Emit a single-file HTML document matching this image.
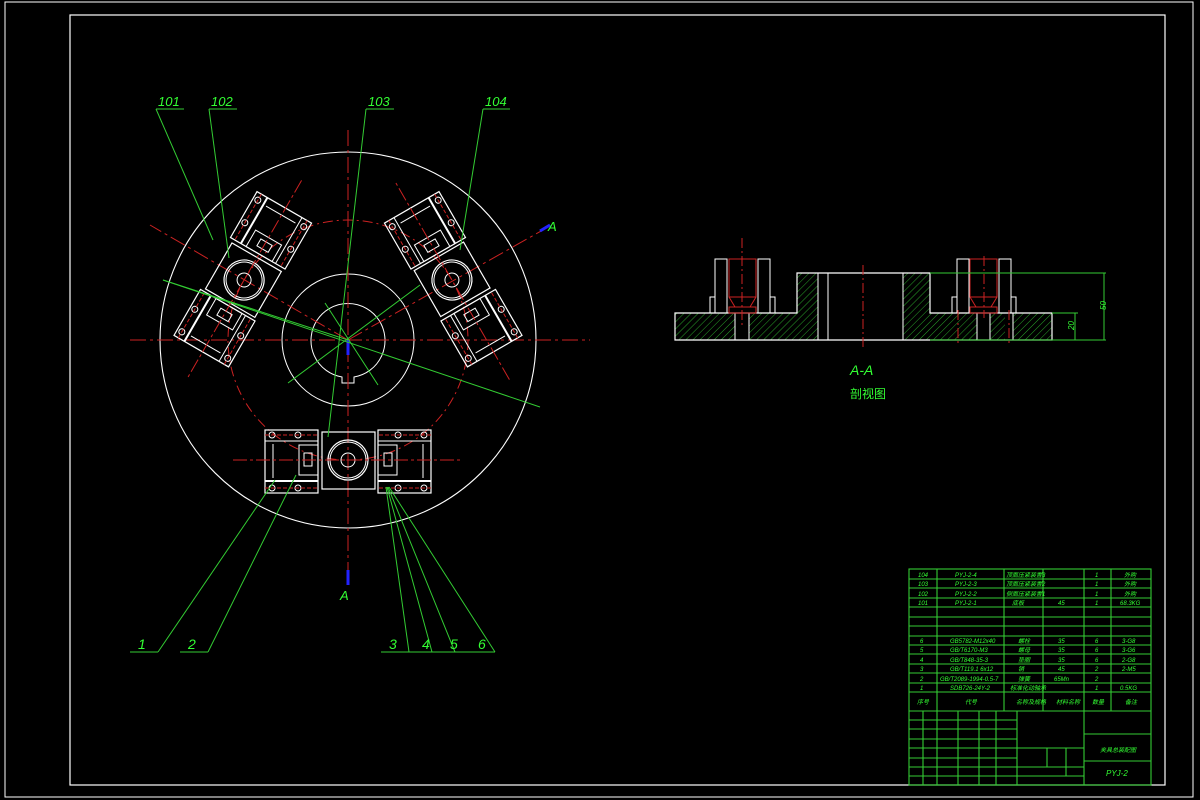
<!DOCTYPE html>
<html><head><meta charset="utf-8"><style>
html,body{margin:0;padding:0;background:#000;}
svg{display:block}
text{font-family:"Liberation Sans","Noto Sans CJK SC",sans-serif;font-style:italic;fill:#3f3}
</style></head><body>
<svg width="1200" height="800" viewBox="0 0 1200 800" xmlns="http://www.w3.org/2000/svg">
<defs>
<pattern id="h" width="5" height="5" patternUnits="userSpaceOnUse" patternTransform="rotate(45)">
<line x1="0" y1="0" x2="0" y2="5" stroke="#3c3" stroke-width="0.8"/></pattern>
<g id="clamp">
 <rect x="-83" y="90" width="53" height="63" fill="none" stroke="#fff" stroke-width="1.2"/>
 <line x1="-83" y1="101" x2="-30" y2="101" stroke="#fff"/>
 <line x1="-83" y1="141" x2="-30" y2="141" stroke="#fff" stroke-width="2"/>
 <rect x="-49" y="105" width="19" height="30" fill="none" stroke="#fff"/>
 <rect x="-44" y="113" width="8" height="13" fill="none" stroke="#fff"/>
 <line x1="-75" y1="104" x2="-75" y2="138" stroke="#fff"/>
 <circle cx="-76" cy="95" r="3" fill="none" stroke="#fff"/><circle cx="-76" cy="148" r="3" fill="none" stroke="#fff"/>
 <circle cx="-50" cy="95" r="3" fill="none" stroke="#fff"/><circle cx="-50" cy="148" r="3" fill="none" stroke="#fff"/>
 <line x1="-83" y1="95" x2="-30" y2="95" stroke="#c22" stroke-dasharray="4 2"/>
 <line x1="-83" y1="148" x2="-30" y2="148" stroke="#c22" stroke-dasharray="4 2"/>
</g>
<g id="assy">
 <rect x="-26" y="92" width="53" height="57" fill="none" stroke="#fff" stroke-width="1.2"/>
 <circle cx="0" cy="120" r="20" fill="none" stroke="#fff" stroke-width="1.2"/>
 <circle cx="0" cy="120" r="18" fill="none" stroke="#fff"/>
 <circle cx="0" cy="120" r="7" fill="none" stroke="#fff"/>
 <use href="#clamp"/>
 <use href="#clamp" transform="scale(-1,1)"/>
 <line x1="-115" y1="120" x2="115" y2="120" stroke="#c22" stroke-dasharray="14 3 3 3"/>
</g>
</defs>
<rect x="5" y="2" width="1188" height="795" fill="none" stroke="#fff" stroke-width="1"/>
<rect x="70" y="15" width="1095" height="770" fill="none" stroke="#fff" stroke-width="1.2"/>

<!-- main view -->
<g>
<circle cx="348" cy="340" r="188" fill="none" stroke="#fff" stroke-width="1.1"/>
<circle cx="348" cy="340" r="66" fill="none" stroke="#fff"/>
<path d="M342 377 A37 37 0 1 1 354 377 L354 383 L342 383 Z" fill="none" stroke="#fff"/>
<circle cx="348" cy="340" r="120" fill="none" stroke="#c22" stroke-dasharray="10 4 2 4"/>
<line x1="130" y1="340" x2="590" y2="340" stroke="#c22" stroke-dasharray="16 4 3 4"/>
<line x1="348" y1="130" x2="348" y2="575" stroke="#c22" stroke-dasharray="16 4 3 4"/>
<line x1="348" y1="340" x2="550" y2="226" stroke="#c22" stroke-dasharray="16 4 3 4"/>
<line x1="348" y1="340" x2="150" y2="225" stroke="#c22" stroke-dasharray="16 4 3 4"/>
<line x1="540" y1="231" x2="550" y2="225" stroke="#22f" stroke-width="3"/>
<line x1="348" y1="570" x2="348" y2="585" stroke="#22f" stroke-width="3"/>
<line x1="348" y1="340" x2="348" y2="355" stroke="#22f" stroke-width="3"/>
<text x="548" y="231" font-size="13">A</text>
<text x="340" y="600" font-size="13">A</text>
<use href="#assy" transform="translate(348,340)"/>
<use href="#assy" transform="translate(348,340) rotate(120)"/>
<use href="#assy" transform="translate(348,340) rotate(240)"/>
<!-- dims -->
<g stroke="#3c3" stroke-width="1" fill="none">
<line x1="163" y1="280" x2="540" y2="407"/>
<line x1="163" y1="280" x2="348" y2="340"/>
<line x1="288" y1="383" x2="420" y2="285"/>
<line x1="325" y1="303" x2="378" y2="385"/>
<line x1="156" y1="109" x2="184" y2="109"/><line x1="156" y1="109" x2="213" y2="240"/>
<line x1="209" y1="109" x2="237" y2="109"/><line x1="209" y1="109" x2="229" y2="258"/>
<line x1="366" y1="109" x2="394" y2="109"/><line x1="366" y1="109" x2="328" y2="437"/>
<line x1="483" y1="109" x2="510" y2="109"/><line x1="483" y1="109" x2="460" y2="250"/>
<line x1="130" y1="652" x2="158" y2="652"/><line x1="158" y1="652" x2="275" y2="480"/>
<line x1="180" y1="652" x2="208" y2="652"/><line x1="208" y1="652" x2="296" y2="475"/>
<line x1="381" y1="652" x2="495" y2="652"/>
<line x1="409" y1="652" x2="386" y2="487"/><line x1="432" y1="652" x2="387" y2="487"/>
<line x1="455" y1="652" x2="388" y2="487"/><line x1="495" y1="652" x2="389" y2="487"/>
</g>
<text x="158" y="106" font-size="13">101</text><text x="211" y="106" font-size="13">102</text>
<text x="368" y="106" font-size="13">103</text><text x="485" y="106" font-size="13">104</text>
<text x="138" y="649" font-size="14">1</text><text x="188" y="649" font-size="14">2</text>
<text x="389" y="649" font-size="14">3</text><text x="422" y="649" font-size="14">4</text>
<text x="450" y="649" font-size="14">5</text><text x="478" y="649" font-size="14">6</text>
</g>

<!-- section view -->
<g>
<path d="M675 313 H735 V340 H675 Z M749 313 H797 V273 H818 V340 H749 Z M903 273 H930 V313 H977 V340 H903 Z M990 313 H1005 V340 H990 Z M1013 313 H1052 V340 H1013 Z" fill="url(#h)"/>
<path d="M675 313 H797 V273 H930 V313 H1052 V340 H675 Z" fill="none" stroke="#fff" stroke-width="1.2"/>
<line x1="818" y1="273" x2="818" y2="340" stroke="#fff"/><line x1="828" y1="273" x2="828" y2="340" stroke="#fff"/>
<line x1="903" y1="273" x2="903" y2="340" stroke="#fff"/>
<line x1="735" y1="313" x2="735" y2="340" stroke="#fff"/><line x1="749" y1="313" x2="749" y2="340" stroke="#fff"/>
<line x1="977" y1="313" x2="977" y2="340" stroke="#fff"/><line x1="990" y1="313" x2="990" y2="340" stroke="#fff"/>
<line x1="1013" y1="313" x2="1013" y2="340" stroke="#fff"/>
<g fill="none" stroke="#fff">
<rect x="715" y="259" width="12" height="54"/><rect x="758" y="259" width="12" height="54"/>
<rect x="710" y="297" width="5" height="16"/><rect x="770" y="297" width="5" height="16"/>
<rect x="957" y="259" width="12" height="54"/><rect x="999" y="259" width="12" height="54"/>
<rect x="952" y="297" width="5" height="16"/><rect x="1011" y="297" width="5" height="16"/>
</g>
<g fill="none" stroke="#c22">
<rect x="729" y="259" width="27" height="38"/><path d="M729 297 L735 307 H750 L756 297"/><rect x="729" y="307" width="27" height="6"/>
<rect x="970" y="259" width="27" height="38"/><path d="M970 297 L976 307 H991 L997 297"/><rect x="970" y="307" width="27" height="6"/>
<line x1="742" y1="238" x2="742" y2="326" stroke-dasharray="10 3 2 3"/>
<line x1="863" y1="265" x2="863" y2="348" stroke-dasharray="10 3 2 3"/>
<line x1="984" y1="256" x2="984" y2="318" stroke-dasharray="10 3 2 3"/>
<line x1="958" y1="310" x2="958" y2="344" stroke-dasharray="10 3 2 3"/>
<line x1="1009" y1="310" x2="1009" y2="344" stroke-dasharray="10 3 2 3"/>
</g>
<g stroke="#3c3" fill="none">
<line x1="930" y1="273" x2="1106" y2="273"/><line x1="930" y1="340" x2="1106" y2="340"/>
<line x1="1052" y1="313" x2="1078" y2="313"/>
<line x1="1104" y1="273" x2="1104" y2="340"/><line x1="1075" y1="313" x2="1075" y2="340"/>
</g>
<text x="1096" y="312" font-size="8" transform="rotate(-90 1100 306)">50</text>
<text x="1066" y="330" font-size="8" transform="rotate(-90 1070 326)">20</text>
<text x="850" y="375" font-size="14">A-A</text>
<text x="850" y="398" font-size="12" style="font-style:normal">剖视图</text>
</g>

<!-- title block -->
<g stroke="#3c3" stroke-width="1.1" fill="none">
<rect x="909" y="569" width="242" height="216"/>
<path d="M909 579H1151M909 588H1151M909 598H1151M909 607H1151M909 617H1151M909 626H1151M909 636H1151M909 645H1151M909 654H1151M909 664H1151M909 673H1151M909 683H1151M909 692H1151M909 711H1151"/>
<path d="M937 569V711M1004 569V711M1043 569V711M1084 569V711M1111 569V711"/>
<path d="M909 720H1017M909 729H1017M909 739H1017M909 748H1017M909 758H1017M909 767H1017M909 776H1017"/>
<path d="M923 711V785M937 711V785M958 711V785M979 711V785M996 711V785M1017 711V785"/>
<path d="M1084 711V785M1084 734H1151M1084 761H1151M1017 748H1084M1017 767H1084M1017 776H1084M1047 748V767M1066 748V776"/>
</g>
<g font-size="6" style="font-style:normal">
<text x="918" y="577">104</text><text x="955" y="577">PYJ-2-4</text><text x="1006" y="577">顶面压紧装置3</text><text x="1095" y="577">1</text><text x="1124" y="577">外购</text>
<text x="918" y="586">103</text><text x="955" y="586">PYJ-2-3</text><text x="1006" y="586">顶面压紧装置2</text><text x="1095" y="586">1</text><text x="1124" y="586">外购</text>
<text x="918" y="596">102</text><text x="955" y="596">PYJ-2-2</text><text x="1006" y="596">侧面压紧装置1</text><text x="1095" y="596">1</text><text x="1124" y="596">外购</text>
<text x="918" y="605">101</text><text x="955" y="605">PYJ-2-1</text><text x="1012" y="605">底板</text><text x="1058" y="605">45</text><text x="1095" y="605">1</text><text x="1120" y="605">68.3KG</text>
<text x="920" y="643">6</text><text x="950" y="643">GB5782-M12x40</text><text x="1018" y="643">螺栓</text><text x="1058" y="643">35</text><text x="1095" y="643">6</text><text x="1122" y="643">3-G8</text>
<text x="920" y="652">5</text><text x="950" y="652">GB/T6170-M3</text><text x="1018" y="652">螺母</text><text x="1058" y="652">35</text><text x="1095" y="652">6</text><text x="1122" y="652">3-G6</text>
<text x="920" y="662">4</text><text x="950" y="662">GB/T848-35-3</text><text x="1018" y="662">垫圈</text><text x="1058" y="662">35</text><text x="1095" y="662">6</text><text x="1122" y="662">2-G8</text>
<text x="920" y="671">3</text><text x="950" y="671">GB/T119.1 6x12</text><text x="1018" y="671">销</text><text x="1058" y="671">45</text><text x="1095" y="671">2</text><text x="1122" y="671">2-M5</text>
<text x="920" y="681">2</text><text x="940" y="681">GB/T2089-1994-0.5-7</text><text x="1018" y="681">弹簧</text><text x="1054" y="681">65Mn</text><text x="1095" y="681">2</text>
<text x="920" y="690">1</text><text x="950" y="690">SDB726-24Y-2</text><text x="1010" y="690">标准化动轴承</text><text x="1095" y="690">1</text><text x="1120" y="690">0.5KG</text>
<text x="917" y="704">序号</text><text x="965" y="704">代号</text><text x="1016" y="704">名称及规格</text><text x="1056" y="704">材料名称</text><text x="1092" y="704">数量</text><text x="1125" y="704">备注</text>
<text x="1100" y="752">夹具总装配图</text>
<text x="1106" y="776" font-size="8" style="font-style:italic">PYJ-2</text>
</g>
</svg>
</body></html>
